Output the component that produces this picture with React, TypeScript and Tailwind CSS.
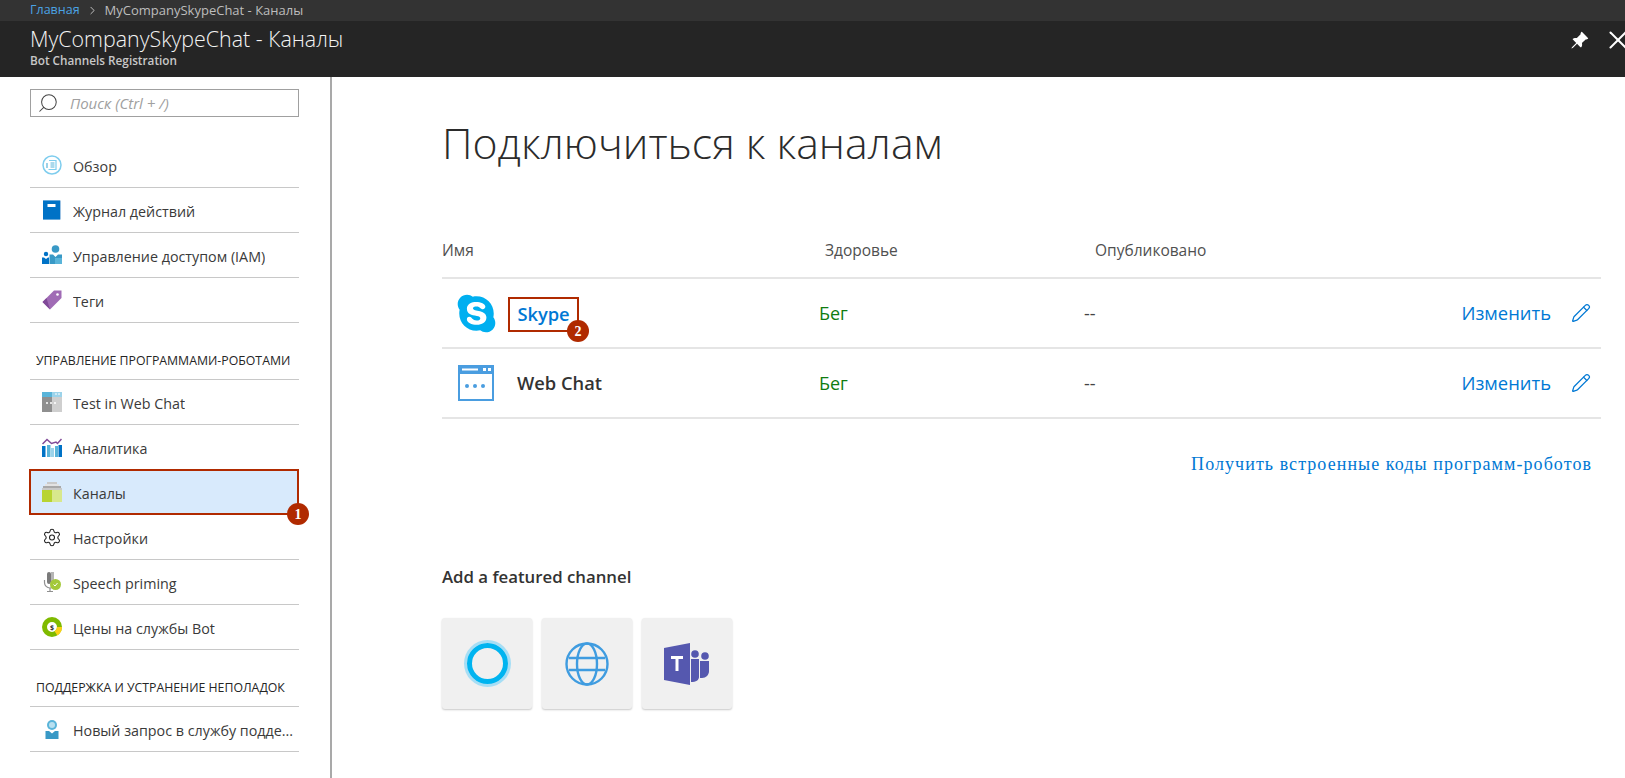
import { ReactNode } from "react";
import { ChevronRight, Pencil, Search, Settings, X } from "lucide-react";
import { BsPinAngleFill } from "react-icons/bs";
import { FaSkype } from "react-icons/fa";

const font = "font-['Open_Sans',sans-serif]";

function OverviewIcon() {
  return (
    <svg width="20" height="20" viewBox="0 0 20 20" fill="none">
      <circle cx="10" cy="10" r="9" stroke="#7fcdee" strokeWidth="1.5" />
      <path d="M7 5.5h7v9H6.5" stroke="#7fcdee" strokeWidth="1.2" />
      <path d="M8.5 8h4M8.5 10h4M8.5 12h4M5 8v5" stroke="#59b4d9" strokeWidth="1.2" />
    </svg>
  );
}

function BookIcon() {
  return (
    <svg width="20" height="20" viewBox="0 0 20 20">
      <rect x="1" y="0.5" width="18" height="19" fill="#a0c4e4" />
      <rect x="1" y="0.5" width="17" height="19" fill="#0072c6" />
      <rect x="5.5" y="4" width="8" height="3" fill="#fff" />
    </svg>
  );
}

function AccessIcon() {
  return (
    <svg width="20" height="20" viewBox="0 0 20 20">
      <circle cx="13.5" cy="4" r="3.8" fill="#3999c6" />
      <path d="M7.5 9.5h3.5l2.5 2.5 2.5-2.5H20V19H7.5z" fill="#3999c6" />
      <circle cx="4" cy="9" r="2.2" fill="#0072c6" />
      <path d="M0 12.5h2l2 1.5 2-1.5h1V19H0z" fill="#0072c6" />
      <rect x="13" y="13" width="7" height="6" fill="#59b4d9" />
    </svg>
  );
}

function TagIcon() {
  return (
    <svg width="20" height="20" viewBox="0 0 20 20">
      <path d="M12 0.5h7.5V8L8 19.5 0.5 12z" fill="#a06bb5" />
      <path d="M12 0.5L0.5 12 8 19.5 4.5 8z" fill="#804998" />
      <circle cx="15.5" cy="4.5" r="1.3" fill="#fff" />
    </svg>
  );
}

function TestChatIcon() {
  return (
    <svg width="20" height="20" viewBox="0 0 20 20">
      <rect x="0" y="0" width="10" height="5" fill="#59b4d9" />
      <rect x="10" y="0" width="10" height="5" fill="#9cd3ea" />
      <rect x="0" y="5" width="10" height="15" fill="#8f8f8f" />
      <rect x="10" y="5" width="10" height="15" fill="#cfcfcf" />
      <path d="M13 2h2M16 2h2" stroke="#fff" />
      <path d="M4 11h2M8 11h2M12 11h2" stroke="#fff" strokeWidth="1.4" />
    </svg>
  );
}

function AnalyticsIcon() {
  return (
    <svg width="20" height="20" viewBox="0 0 20 20" fill="none">
      <path d="M0.5 7L5 2.5l4.5 4L14 5l1.5 1.5L19.5 2" stroke="#804998" strokeWidth="1.5" />
      <rect x="0" y="9" width="3.5" height="11" fill="#0072c6" />
      <rect x="5" y="8" width="3.5" height="12" fill="#59b4d9" />
      <rect x="9" y="11" width="3" height="9" fill="#9cd3ea" />
      <rect x="13" y="9" width="3" height="11" fill="#59b4d9" />
      <rect x="16.5" y="8" width="3.5" height="12" fill="#0072c6" />
    </svg>
  );
}

function ChannelsIcon() {
  return (
    <svg width="20" height="20" viewBox="0 0 20 20">
      <rect x="5" y="0" width="10" height="2" fill="#c9c9c9" />
      <rect x="3" y="2" width="14" height="2" fill="#e3e3e3" />
      <rect x="1" y="4" width="18" height="2" fill="#a8a8a8" />
      <rect x="0" y="6" width="20" height="2" fill="#c9c9c9" />
      <rect x="0" y="8" width="10" height="12" fill="#b8d432" />
      <rect x="10" y="8" width="10" height="12" fill="#d8e88d" />
    </svg>
  );
}

function SpeechIcon() {
  return (
    <svg width="20" height="20" viewBox="0 0 20 20" fill="none">
      <rect x="5" y="0" width="4" height="12" rx="2" fill="#7a7a7a" />
      <rect x="9" y="0" width="3" height="12" fill="#b5b5b5" />
      <path d="M2.5 8v2.5a5.5 5.5 0 0011 0" stroke="#8f8f8f" strokeWidth="1.2" />
      <path d="M8 16v4M5 19.5h6" stroke="#8f8f8f" strokeWidth="1.2" />
      <circle cx="13.5" cy="12.5" r="5.5" fill="#a4c93a" />
      <path d="M11.5 12.5l1.5 1.5 2.5-3" stroke="#fff" />
    </svg>
  );
}

function PricingIcon() {
  return (
    <svg width="20" height="20" viewBox="0 0 20 20" fill="none">
      <circle cx="10" cy="10" r="7.5" stroke="#7fba00" strokeWidth="5" />
      <path d="M17.5 10a7.5 7.5 0 01-3.5 6.3" stroke="#fcd116" strokeWidth="5" />
      <text x="10" y="12.5" textAnchor="middle" fontSize="7" fontWeight="700" fill="#333">
        $
      </text>
    </svg>
  );
}

function SupportIcon() {
  return (
    <svg width="20" height="20" viewBox="0 0 20 20" fill="none">
      <circle cx="10" cy="6" r="5" fill="#59b4d9" />
      <circle cx="10" cy="6" r="3" fill="#b8e0f0" />
      <path d="M3.5 12H7l3 2.5 3-2.5h3.5v8h-13z" fill="#3999c6" />
    </svg>
  );
}

function WebChatIcon() {
  return (
    <svg width="36" height="36" viewBox="0 0 36 36" fill="none">
      <rect x="1" y="1" width="34" height="34" stroke="#4a9de0" strokeWidth="2" />
      <rect x="1" y="1" width="34" height="8" fill="#4a9de0" />
      <rect x="4" y="3.5" width="16" height="2" fill="#fff" />
      <rect x="25" y="3" width="3" height="3" fill="#fff" />
      <rect x="30" y="3" width="3" height="3" fill="#fff" />
      <circle cx="9" cy="21" r="2" fill="#4a9de0" />
      <circle cx="17" cy="21" r="2" fill="#4a9de0" />
      <circle cx="25" cy="21" r="2" fill="#4a9de0" />
    </svg>
  );
}

function GlobeIcon() {
  return (
    <svg width="44" height="44" viewBox="0 0 44 44" fill="none" stroke="#3f9ce0" strokeWidth="2.4">
      <circle cx="22" cy="22" r="20.5" />
      <ellipse cx="22" cy="22" rx="10" ry="20.5" />
      <path d="M4 16h36M4 28h36" />
    </svg>
  );
}

function TeamsIcon() {
  return (
    <svg width="46" height="44" viewBox="0 0 46 44">
      <circle cx="31" cy="12" r="3.8" fill="#5558af" />
      <circle cx="41" cy="14" r="3.8" fill="#5558af" />
      <path d="M27 17h8v18c0 3-3 5-8 5z" fill="#5558af" />
      <path d="M36 19h9v10c0 4-3 7-7 7h-2z" fill="#5558af" />
      <path d="M0 6L26 1v42L0 38z" fill="#5558af" />
      <rect x="7" y="14" width="12" height="3" fill="#fff" />
      <rect x="11.5" y="14" width="3" height="15" fill="#fff" />
    </svg>
  );
}

function Badge({ n }: { n: number }) {
  return (
    <span className="absolute right-[-12px] bottom-[-12px] z-10 flex h-[22px] w-[22px] items-center justify-center rounded-full bg-[#b02a00] font-['Liberation_Serif',serif] text-[14px] font-bold text-white">
      {n}
    </span>
  );
}

function MenuRow({ icon, label, selected }: { icon: ReactNode; label: string; selected?: boolean }) {
  return (
    <div
      className={
        selected
          ? "relative ml-[-1px] mt-[-1px] flex h-[46px] w-[270px] items-center gap-[11px] border-2 border-[#b02a00] bg-[#d8eafc] pl-[11px]"
          : "flex h-[45px] items-center gap-[11px] border-b border-[#c8c8c8] pl-[12px]"
      }
    >
      <span className="flex h-5 w-5 shrink-0 items-center justify-center">{icon}</span>
      <span className="truncate pt-[3px] text-[14.3px] text-[#3a3a3a]">{label}</span>
      {selected && <Badge n={1} />}
    </div>
  );
}

function SectionHead({ label }: { label: string }) {
  return (
    <div className="flex h-[57px] items-end border-b border-[#c8c8c8] pb-[9px] pl-[6px] text-[12.3px] text-[#252525]">
      {label}
    </div>
  );
}

function Sidebar() {
  return (
    <aside className="w-[332px] shrink-0 border-r-2 border-[#a9a9a9] pl-[30px] pt-3">
      <div className="flex h-[28px] w-[269px] items-center gap-[11px] border border-[#a0a0a0] pl-[6px]">
        <Search size={22} strokeWidth={1.1} className="-scale-x-100 text-[#444]" />
        <span className="text-[15px] italic text-[#a0a0a0]">Поиск (Ctrl + /)</span>
      </div>
      <div className="mt-[26px] w-[269px]">
        <MenuRow icon={<OverviewIcon />} label="Обзор" />
        <MenuRow icon={<BookIcon />} label="Журнал действий" />
        <MenuRow icon={<AccessIcon />} label="Управление доступом (IAM)" />
        <MenuRow icon={<TagIcon />} label="Теги" />
        <SectionHead label="УПРАВЛЕНИЕ ПРОГРАММАМИ-РОБОТАМИ" />
        <MenuRow icon={<TestChatIcon />} label="Test in Web Chat" />
        <MenuRow icon={<AnalyticsIcon />} label="Аналитика" />
        <MenuRow icon={<ChannelsIcon />} label="Каналы" selected />
        <MenuRow icon={<Settings size={21} strokeWidth={1.3} className="text-[#222]" />} label="Настройки" />
        <MenuRow icon={<SpeechIcon />} label="Speech priming" />
        <MenuRow icon={<PricingIcon />} label="Цены на службы Bot" />
        <SectionHead label="ПОДДЕРЖКА И УСТРАНЕНИЕ НЕПОЛАДОК" />
        <MenuRow icon={<SupportIcon />} label="Новый запрос в службу подде..." />
      </div>
    </aside>
  );
}

function ChannelRow({ icon, name, boxed }: { icon: ReactNode; name: string; boxed?: boolean }) {
  return (
    <div className="flex h-[70px] items-center border-b-2 border-[#e5e5e5]">
      <div className="flex w-[377px] items-center">
        <span className="ml-[12px] flex w-[44px] shrink-0 justify-center">{icon}</span>
        {boxed ? (
          <span className="relative ml-[10px] mt-[3px] flex h-[35px] w-[71px] items-center justify-center border-2 border-[#b02a00] pb-[1px] text-[18.3px] font-semibold text-[#0078d4]">
            {name}
            <Badge n={2} />
          </span>
        ) : (
          <span className="ml-[19px] text-[18.3px] font-semibold text-[#333]">{name}</span>
        )}
      </div>
      <span className="w-[265px] text-[18px] text-[#107c10]">Бег</span>
      <span className="flex-1 text-[18px] text-[#444]">--</span>
      <span className="text-[18.4px] text-[#0078d4]">Изменить</span>
      <Pencil size={20} strokeWidth={1.5} className="ml-[20px] mr-[10px] text-[#0078d4]" />
    </div>
  );
}

function FeaturedCard({ children }: { children: ReactNode }) {
  return (
    <div className="flex h-[91px] w-[90px] items-center justify-center rounded-[3px] bg-[#f0f0f0] shadow-[0_1px_2px_rgba(0,0,0,0.22)]">
      {children}
    </div>
  );
}

export default function App() {
  return (
    <div className={`flex h-[778px] flex-col overflow-hidden bg-white ${font}`}>
      <header className="shrink-0 text-white">
        <div className="flex h-[21px] items-center bg-[#333] pl-[30px] text-[13px] text-[#bdbdbd]">
          <span className="text-[12.5px] text-[#4ba3e3]">Главная</span>
          <ChevronRight size={13} strokeWidth={1.5} className="mx-[6px] text-[#ddd]" />
          <span>MyCompanySkypeChat - Каналы</span>
        </div>
        <div className="flex h-[56px] items-start justify-between bg-[#252525] pl-[30px]">
          <div>
            <div className="mt-[4px] text-[21.4px] font-light leading-[28px] text-[#f4f4f4]">
              MyCompanySkypeChat - Каналы
            </div>
            <div className="text-[11.75px] font-semibold leading-[14px] text-[#c8c8c8]">Bot Channels Registration</div>
          </div>
          <div className="mr-[-8px] mt-[4px] flex items-center gap-[14px]">
            <BsPinAngleFill size={19} />
            <X size={30} strokeWidth={1.6} />
          </div>
        </div>
      </header>
      <div className="flex min-h-0 flex-1">
        <Sidebar />
        <main className="flex-1 pl-[110px] pr-6">
          <h1 className="mt-[38px] text-[42.75px] font-light leading-[56px] text-[#2b2b2b]">Подключиться к каналам</h1>
          <div className="mt-[50px] flex h-[58px] items-center border-b-2 border-[#e5e5e5] pt-[4px] text-[15.5px] text-[#505050]">
            <span className="w-[383px]">Имя</span>
            <span className="w-[270px]">Здоровье</span>
            <span>Опубликовано</span>
          </div>
          <ChannelRow icon={<FaSkype size={43} className="text-[#00aff0]" />} name="Skype" boxed />
          <ChannelRow icon={<WebChatIcon />} name="Web Chat" />
          <div className="mt-[32px] pr-[9px] text-right font-['Liberation_Serif',serif] text-[18px] tracking-[1.06px] text-[#0078d4]">
            Получить встроенные коды программ-роботов
          </div>
          <h2 className="mt-[86px] text-[16.8px] font-semibold text-[#333]">Add a featured channel</h2>
          <div className="mt-[29px] flex gap-[10px]">
            <FeaturedCard>
              <span className="h-[41px] w-[41px] rounded-full border-[5px] border-[#00b4f0] shadow-[0_0_0_3px_#a6def5]" />
            </FeaturedCard>
            <FeaturedCard>
              <GlobeIcon />
            </FeaturedCard>
            <FeaturedCard>
              <TeamsIcon />
            </FeaturedCard>
          </div>
        </main>
      </div>
    </div>
  );
}
